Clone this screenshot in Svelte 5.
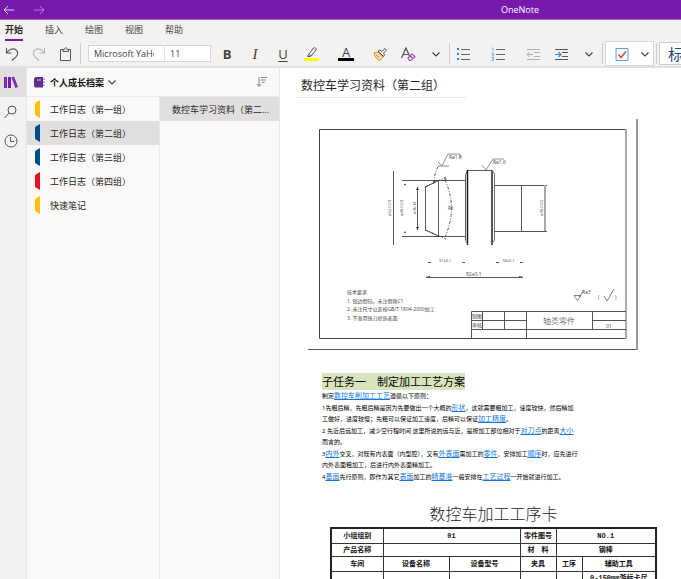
<script lang="ts">
  type Section = { name: string; color: string };

  const tabs = ['开始', '插入', '绘图', '视图', '帮助'];
  let activeTab = $state('开始');

  const sections: Section[] = [
    { name: '工作日志（第一组）', color: '#ffc10e' },
    { name: '工作日志（第二组）', color: '#004e8c' },
    { name: '工作日志（第三组）', color: '#004e8c' },
    { name: '工作日志（第四组）', color: '#e81123' },
    { name: '快速笔记', color: '#ffc10e' }
  ];
  let activeSection = $state(1);

  let fontName = $state('Microsoft YaHei');
  let fontSize = $state('11');
</script>

{#snippet chevron()}
  <svg width="16" height="16" viewBox="0 0 16 16"><path d="M4.5 6.5 8 10l3.500-3.500" fill="none" stroke="#444" stroke-width="1.200" /></svg>
{/snippet}

<div class="app">
  <header class="titlebar">
    <button aria-label="后退"><svg width="12" height="10" viewBox="0 0 12 10"><path d="M11 5H1M5 1 1 5l4 4" fill="none" stroke="#e6d3f0" /></svg></button>
    <button aria-label="前进"><svg width="12" height="10" viewBox="0 0 12 10"><path d="M1 5h10M7 1l4 4-4 4" fill="none" stroke="#b57fd2" /></svg></button>
    <span class="app-name">OneNote</span>
  </header>

  <nav class="tabs">
    {#each tabs as tab}
      <button class:active={tab === activeTab} onclick={() => (activeTab = tab)}>{tab}</button>
    {/each}
  </nav>

  <div class="toolbar">
    <div class="group history">
      <button aria-label="撤消"><svg width="16" height="16" viewBox="0 0 16 16"><path d="M2.500 2v5h5M2.700 6.800C5 3.500 9 1.800 11.800 3.800c2.800 2 2.200 5 .2 7L8 14.500" fill="none" stroke="#555" stroke-width="1.100" /></svg></button>
      <button aria-label="恢复"><svg width="16" height="16" viewBox="0 0 16 16"><path d="M13.500 2v5h-5M13.300 6.800C11 3.500 7 1.800 4.200 3.800c-2.800 2-2.200 5-.2 7L8 14.500" fill="none" stroke="#b3b3b3" stroke-width="1.100" /></svg></button>
      <button aria-label="粘贴"><svg width="16" height="16" viewBox="0 0 16 16"><path d="M5.500 3.500h-3v11h10v-11h-3M5 5.500v-2h1.500C6.500 1 9 1 9 3.500h1.500v2z" fill="none" stroke="#555" /></svg></button>
    </div>
    <span class="sep"></span>
    <div class="fonts">
      <input class="font-name" aria-label="字体" bind:value={fontName} />
      <input class="font-size" aria-label="字号" bind:value={fontSize} />
    </div>
    <div class="group">
      <button class="letter bold" aria-label="加粗">B</button>
      <button class="letter italic" aria-label="倾斜">I</button>
      <button class="letter under" aria-label="下划线">U</button>
      <button aria-label="突出显示"><svg width="16" height="16" viewBox="0 0 16 16"><path d="M5 9.500 10.500 2c1-1 3.500.5 2.500 2L7.500 10.500H4.500zM5 8l3 2.300" fill="none" stroke="#555" /><path d="M1 12h14v3H1z" fill="#ff0" /></svg></button>
    </div>
    <div class="group color">
      <button class="letter fore" aria-label="字体颜色">A</button>
    </div>
    <div class="group brush">
      <button aria-label="格式刷"><svg width="16" height="16" viewBox="0 0 16 16"><path d="m2 7 4-1 5 5-3 3.500C5 14 3 11 2 7z" fill="#fbe0b8" stroke="#e58a2a" /><path d="M4 9l2 1 1 2" fill="none" stroke="#e58a2a" /><path d="m6 5 5.500 5.500 1-1.800-1-1.500L14.500 4 13 2.500 9.800 5.600 8 4z" fill="#fff" stroke="#555" /></svg></button>
      <button aria-label="清除格式"><svg width="16" height="16" viewBox="0 0 16 16"><path d="M1.500 12 6 2l3.500 8M3 8.500h5.500" fill="none" stroke="#555" stroke-width="1.200" /><path d="m8 12 4-4 3 2.500-4 4H9.500zM10 10l3 2.500" fill="#f8effb" stroke="#a845c0" stroke-width="1.100" /></svg></button>
      <button aria-label="更多字体选项">{@render chevron()}</button>
    </div>
    <span class="sep"></span>
    <div class="group lists">
      <button aria-label="项目符号"><svg width="16" height="16" viewBox="0 0 16 16"><path d="M6 3.500h9M6 8.500h9M6 13.500h9" stroke="#666" /><path d="M2 2h2v2H2zM2 7h2v2H2zM2 12h2v2H2z" fill="#2b88c9" /></svg></button>
      <button aria-label="编号"><svg width="16" height="16" viewBox="0 0 16 16"><path d="M6 3.500h9M6 8.500h9M6 13.500h9" stroke="#666" /><path d="M2 2h1v3M1.500 7h2v1.500h-1V10h1.500M1.500 11.500h2v3h-2M2 13h1" fill="none" stroke="#5aa4d6" stroke-width=".8" /></svg></button>
    </div>
    <div class="group indent">
      <button aria-label="减少缩进"><svg width="16" height="16" viewBox="0 0 16 16"><path d="M2 3.500h13M9 6.500h6M9 10.500h6M2 13.500h13M8 8.500H2M4.500 6 2 8.500 4.500 11" fill="none" stroke="#b0b0b0" /></svg></button>
      <button aria-label="增加缩进"><svg width="16" height="16" viewBox="0 0 16 16"><path d="M2 3.500h13M9 6.500h6M9 10.500h6M2 13.500h13" stroke="#555" /><path d="M2 8.500h6M5.500 6 8 8.500 5.500 11" fill="none" stroke="#2b93d6" stroke-width="1.200" /></svg></button>
      <button aria-label="更多段落选项">{@render chevron()}</button>
    </div>
    <span class="sep"></span>
    <div class="todo">
      <button aria-label="待办事项"><svg width="16" height="16" viewBox="0 0 16 16"><path d="M2 2.500h12v12H2z" fill="#f6fbfd" stroke="#5aa6c4" /><path d="m4.500 8.500 2.500 3 5-6" fill="none" stroke="#e04b43" stroke-width="1.600" /></svg></button>
      <button aria-label="更多标记">{@render chevron()}</button>
    </div>
    <span class="sep tight"></span>
    <button class="styles">标题</button>
  </div>

  <main>
    <aside class="rail">
      <button class="current" aria-label="笔记本"><svg width="16" height="16" viewBox="0 0 16 16"><path d="M1 2h3v11H1zM5 2h3v11H5zM8.500 2.500l2.500-1 4 10.500-2.600 1z" fill="#7719aa" /><path d="M2.500 2v11M10 3l3.500 9" stroke="#9c5cc2" stroke-width=".6" /></svg></button>
      <button aria-label="搜索"><svg width="16" height="16" viewBox="0 0 16 16"><circle cx="9" cy="6" r="4" fill="none" stroke="#555" /><path d="M6 9 1.500 14" stroke="#555" /></svg></button>
      <button aria-label="最近的笔记"><svg width="16" height="16" viewBox="0 0 16 16"><circle cx="8" cy="8" r="6" fill="none" stroke="#555" /><path d="M7.500 4v4.500H11" fill="none" stroke="#555" /></svg></button>
    </aside>

    <div class="browser">
      <div class="notebook">
        <button class="book">
          <svg width="11" height="11" viewBox="0 0 11 11"><path d="M2 0h7v10.500H2C0 10.500 0 9 0 8V2C0 1 1 0 2 0z" fill="#5c2e91" /><path d="M3 3h4" stroke="#d8c8e8" /><path d="M10 1.500V3M10 4.500V6M10 7.500V9" stroke="#5c2e91" /></svg>
          个人成长档案
          {@render chevron()}
        </button>
        <button class="sort" aria-label="页面排序"><svg width="12" height="12" viewBox="0 0 12 12"><path d="M3 1v9M1 8l2 2.300L5 8M5 1.500h6M5 4h5M6 6.500h2.500" fill="none" stroke="#777" stroke-width=".9" /></svg></button>
      </div>
      <div class="columns">
        <div class="sections">
          {#each sections as section, i}
            <button class:selected={i === activeSection} onclick={() => (activeSection = i)}>
              <svg width="7" height="18" viewBox="0 0 7 18"><path d="M6 0v18L2.500 16Q1 15.500 1 14V4Q1 2.500 2.500 2z" fill={section.color} /></svg>
              {section.name}
            </button>
          {/each}
        </div>
        <div class="pages">
          <button class="selected">数控车学习资料（第二...</button>
        </div>
      </div>
    </div>

    <article>
      <h1>数控车学习资料（第二组）</h1>

      <svg class="drawing" width="330" height="231" viewBox="308 119 330 231">
        <path d="M308 349.500h329.500" stroke="#555" />
        <path d="M637 119v231" stroke="#999" stroke-width="2" />
        <path d="M319.500 338.500v-209H626M319.500 338.500H626" fill="none" stroke="#444" />
        <path d="M626 129v210" stroke="#aaa" stroke-width="2" />

        <!-- shaft outline -->
        <g fill="none" stroke="#333">
          <path d="M402 180.500h63M402 236.500h63M393.500 171v74M417.500 187v43" stroke="#555" />
          <path d="M425.500 187v43l13 6v-55.500zM465.500 240v-65l2-4.500h25" stroke-width=".8" />
          <path d="M467.500 170v75M492 170v75" stroke="#111" stroke-width="1.400" />
          <path d="M465.500 240l2 4M492 170l2.500 4v66l-2.500 4" stroke="#777" />
          <path d="M494 185.500h53M494 231.500h53M521.500 185v46" stroke="#555" />
          <path d="M545 185v46" stroke="#aaa" stroke-width="2" />
          <path d="M425 187l21-10M425 230l21 9M445 180q13 28 0 57M434 183q0-10 5-18" stroke-width=".8" stroke-dasharray="3 1.500 1 1.500" />
          <path d="M438 166h11M438 162l4 4 6-12h12v4M482 165l4 5 7-11h11" stroke="#777" stroke-width=".8" />
          <path d="M426 277.500h97M428 262.500h3M462 262.500h3M496 262.500h3M520 262.500h3" stroke="#555" />
        </g>
        <path d="m433 180 1 4 1-4zM404 184l1 2 1-2zM404 233l1-2 1 2zM416 190l1.500-3 1.500 3zM416 227l1.500 3 1.500-3zM445 180l-1-2 3 1zM426 277l4-1v1zM523 277l-4-1v1z" fill="#333" />

        <g class="cad">
          <text x="449" y="159">Ra1.6</text>
          <text x="493" y="164">Ra1.6</text>
          <text class="dim" transform="translate(391 216) rotate(-90)">ø52-0.03</text>
          <text class="dim" transform="translate(403 216) rotate(-90)">ø48-0.03</text>
          <text class="dim" transform="translate(416 214) rotate(-90)">ø36.14</text>
          <text x="448" y="210">R1</text>
          <text class="dim" transform="translate(543 216) rotate(-90)">ø38-0.02</text>
          <text class="dim" x="439" y="262">31±0.1</text>
          <text class="dim" x="502" y="262">18±0.1</text>
          <text x="466" y="276">82±0.1</text>
          <text x="347" y="294">技术要求</text>
          <text x="347" y="303">1. 锐边倒钝，未注倒角C1</text>
          <text x="347" y="311">2. 未注尺寸公差按GB/T 1804-2000加工</text>
          <text x="347" y="320">3. 不准用锉刀修饰表面</text>
          <text x="582" y="294">Ra3</text>
          <text x="598" y="299">(</text>
          <text x="615" y="299">)</text>
          <text x="472" y="318">制图</text>
          <text x="472" y="327">审核</text>
          <text x="606" y="328">01</text>
          <text class="part" x="543" y="324">轴类零件</text>
        </g>
        <path d="M574 295.500h7l-3.500 5zM579 297l5-7M604 296l3 5 7-12" fill="none" stroke="#666" stroke-width=".8" />

        <path d="M471.500 338v-26.500H626M471 320.500h55M593 320.500h33M471 329.500h155M482.500 312v17M504.500 312v17M526.500 312v26M592.500 312v17" fill="none" stroke="#555" />
      </svg>

      <div class="notes">
        <h2>子任务一　制定加工工艺方案</h2>
        <p>制定<a href="#turning">数控车削加工工艺</a>遵循以下原则：</p>
        <p>1先粗后精，先粗后精是因为先要做出一个大概的<a href="#shape">形状</a>，这就需要粗加工，速度较快，然后精加<br />工做好，进度较慢；先粗可以保证加工速度，后精可以保证<a href="#precision">加工精度</a>。</p>
        <p>2 先近后远加工，减少空行程时间 这里所说的远与近，是按加工部位相对于<a href="#tool">对刀点</a>的距离<a href="#size">大小</a><br />而言的。</p>
        <p>3<a href="#inout">内外</a>交叉，对既有内表面（内型腔），又有<a href="#outer">外表面</a>需加工的<a href="#part">零件</a>，安排加工<a href="#order">顺序</a>时，应先进行<br />内外表面粗加工，后进行内外表面精加工。</p>
        <p>4<a href="#datum">基面</a>先行原则，即作为其它<a href="#surface">表面</a>加工的<a href="#fine">精基准</a>一般安排在<a href="#process">工艺过程</a>一开始就进行加工。</p>
      </div>

      <h3>数控车加工工序卡</h3>
      <table>
        <colgroup>
          <col class="c1" /><col class="c2" /><col class="c3" /><col class="c4" /><col class="c5" /><col class="c6" />
        </colgroup>
        <tbody>
          <tr class="tall"><th>小组组别</th><td colspan="2">01</td><th>零件图号</th><td colspan="2">NO.1</td></tr>
          <tr><th>产品名称</th><td colspan="2"></td><th>材　料</th><td colspan="2">钢棒</td></tr>
          <tr class="tall"><th>车间</th><th>设备名称</th><th>设备型号</th><th>夹具</th><th>工序</th><th>辅助工具</th></tr>
          <tr><td></td><td></td><td></td><td></td><td></td><td>0-150mm游标卡尺</td></tr>
        </tbody>
      </table>
    </article>
  </main>
</div>

<style>
  :global(body) {
    margin: 0;
  }
  .app {
    height: 100vh;
    display: flex;
    flex-direction: column;
    overflow: hidden;
    background: #fff;
    color: #262626;
    font-family: 'Open Sans', 'Noto Sans CJK SC', sans-serif;
    font-size: 9px;
  }
  button {
    padding: 0;
    border: 0;
    background: none;
    color: inherit;
    font: inherit;
    white-space: nowrap;
  }
  svg {
    display: block;
    flex-shrink: 0;
  }

  .titlebar {
    display: flex;
    align-items: center;
    flex-shrink: 0;
    height: 19px;
    padding-left: 3px;
    gap: 18px;
    background: #7719aa;
    border-bottom: 1px solid #a765c8;
    color: #fff;
  }
  .app-name {
    flex: 1;
    padding-left: 296px;
    text-align: center;
  }

  .tabs {
    display: flex;
    flex-shrink: 0;
    gap: 22px;
    padding: 0 5px;
    height: 21px;
    background: #f3f2f1;
  }
  .tabs button {
    border-bottom: 2px solid transparent;
    color: #444;
  }
  .tabs button.active {
    border-bottom-color: #7719aa;
    color: #262626;
    font-weight: 600;
  }

  .toolbar {
    display: flex;
    align-items: center;
    flex-shrink: 0;
    height: 25px;
    background: #f3f2f1;
    border-bottom: 2px solid #e3e1df;
    overflow: hidden;
  }
  .group {
    display: flex;
    flex-shrink: 0;
    gap: 12px;
    margin-left: 8px;
  }
  .group button {
    width: 16px;
    height: 18px;
  }
  .history {
    gap: 11px;
    margin-left: 4px;
    margin-right: 6px;
  }
  .color,
  .indent {
    margin-left: 19px;
  }
  .brush {
    margin-left: 18px;
    margin-right: 5px;
  }
  .lists {
    gap: 19px;
    margin-left: 5px;
  }
  .indent {
    margin-right: 5px;
  }
  .sep {
    flex-shrink: 0;
    width: 1px;
    height: 21px;
    background: #cfcdcb;
  }
  .fonts {
    display: flex;
    flex-shrink: 0;
    margin-left: 7px;
    border: 1px solid #d8d6d4;
    background: #fff;
  }
  .fonts input {
    box-sizing: border-box;
    height: 15px;
    padding: 0 10px 0 5px;
    border: 0;
    background: none;
    color: #444;
    font: inherit;
    outline: none;
  }
  .fonts .font-name {
    width: 76px;
    border-right: 1px solid #e3e1df;
  }
  .fonts .font-size {
    width: 45px;
  }
  .letter {
    font-size: 13px;
    line-height: 18px;
    color: #444;
  }
  .bold {
    font-weight: 700;
  }
  .italic {
    font-family: 'Liberation Serif', serif;
    font-style: italic;
    font-size: 15px;
  }
  .under {
    text-decoration: underline;
    text-underline-offset: 2px;
  }
  .group .fore {
    height: 15px;
    line-height: 13px;
    border-bottom: 3px solid #000;
  }
  .todo {
    box-sizing: border-box;
    display: flex;
    align-items: center;
    flex-shrink: 0;
    gap: 7px;
    height: 25px;
    margin: 0 2px;
    padding-left: 8px;
    border: 1px solid #dad8d6;
    background: #fff;
  }
  .tight {
    margin-right: 2px;
  }
  .styles {
    box-sizing: border-box;
    flex-shrink: 0;
    width: 120px;
    height: 23px;
    padding-left: 8px;
    border: 1px solid #d0cecc;
    background: #fff;
    color: #1f4e79;
    font-size: 15px;
    line-height: 20px;
    text-align: left;
  }

  main {
    display: flex;
    flex: 1;
    min-height: 0;
  }
  .rail {
    display: flex;
    flex-direction: column;
    flex-shrink: 0;
    width: 26px;
    background: #f3f2f1;
    border-right: 1px solid #e8e6e4;
  }
  .rail button {
    height: 29px;
    padding-left: 3px;
  }
  .rail .current {
    background: #e1dfdd;
  }
  .browser {
    display: flex;
    flex-direction: column;
    flex-shrink: 0;
    width: 252px;
    background: #faf9f8;
    border-right: 1px solid #e8e6e4;
  }
  .notebook {
    display: flex;
    justify-content: space-between;
    align-items: center;
    height: 28px;
    padding: 0 11px 0 7px;
    border-bottom: 1px solid #eceae8;
  }
  .book {
    display: flex;
    align-items: center;
    color: #111;
    font-weight: 700;
  }
  .book svg:first-child {
    margin-right: 5px;
  }
  .columns {
    display: flex;
    flex: 1;
  }
  .sections {
    flex: 0 0 132px;
  }
  .pages {
    flex: 1;
    border-left: 1px solid #eceae8;
  }
  .sections button {
    display: flex;
    align-items: center;
    gap: 9px;
    width: 100%;
    height: 24px;
    padding-left: 7px;
  }
  .pages button {
    width: 100%;
    height: 24px;
    padding-left: 12px;
    text-align: left;
  }
  .selected {
    background: #e1dfdd;
  }

  article {
    flex: 1;
    min-width: 0;
    overflow: hidden;
    padding: 0 16px;
  }
  h1,
  h2,
  h3,
  p {
    margin: 0;
    font-weight: 400;
  }
  h1 {
    width: 165px;
    padding: 6px 0 0 5px;
    border-bottom: 1px solid #e6e6e6;
    font-size: 12px;
    line-height: 23px;
    white-space: nowrap;
  }
  .drawing {
    margin: 21px 0 0 12px;
  }
  .cad {
    fill: #444;
    font-size: 5px;
  }
  .dim {
    font-size: 4px;
  }
  .part {
    font-size: 8px;
    font-weight: 300;
  }
  .notes {
    margin: 23px 0 0 26px;
    font-size: 6px;
    line-height: 11px;
    white-space: nowrap;
    color: #000;
  }
  .notes h2 {
    width: fit-content;
    margin-bottom: 1px;
    background: #d8e4bc;
    font-size: 11px;
    line-height: 17px;
  }
  .notes p {
    margin-bottom: 1px;
  }
  .notes a {
    color: #1279d8;
    font-size: 7px;
    line-height: 7px;
  }
  h3 {
    width: 327px;
    margin: 20px 0 2px 34px;
    font-size: 16px;
    font-weight: 300;
    line-height: 22px;
    text-align: center;
  }
  table {
    width: 327px;
    margin-left: 34px;
    border: 2px solid #222;
    border-collapse: collapse;
    table-layout: fixed;
    font-family: 'Liberation Mono', 'Noto Sans CJK SC', monospace;
    font-size: 7px;
    font-weight: 700;
    line-height: 11px;
    color: #111;
  }
  th,
  td {
    height: 12px;
    padding: 0;
    border: 1px solid #333;
    text-align: center;
    white-space: nowrap;
  }
  .tall th,
  .tall td {
    height: 14px;
  }
  .c1 {
    width: 52px;
  }
  .c2 {
    width: 66px;
  }
  .c3 {
    width: 71px;
  }
  .c4 {
    width: 36px;
  }
  .c5 {
    width: 26px;
  }
</style>
